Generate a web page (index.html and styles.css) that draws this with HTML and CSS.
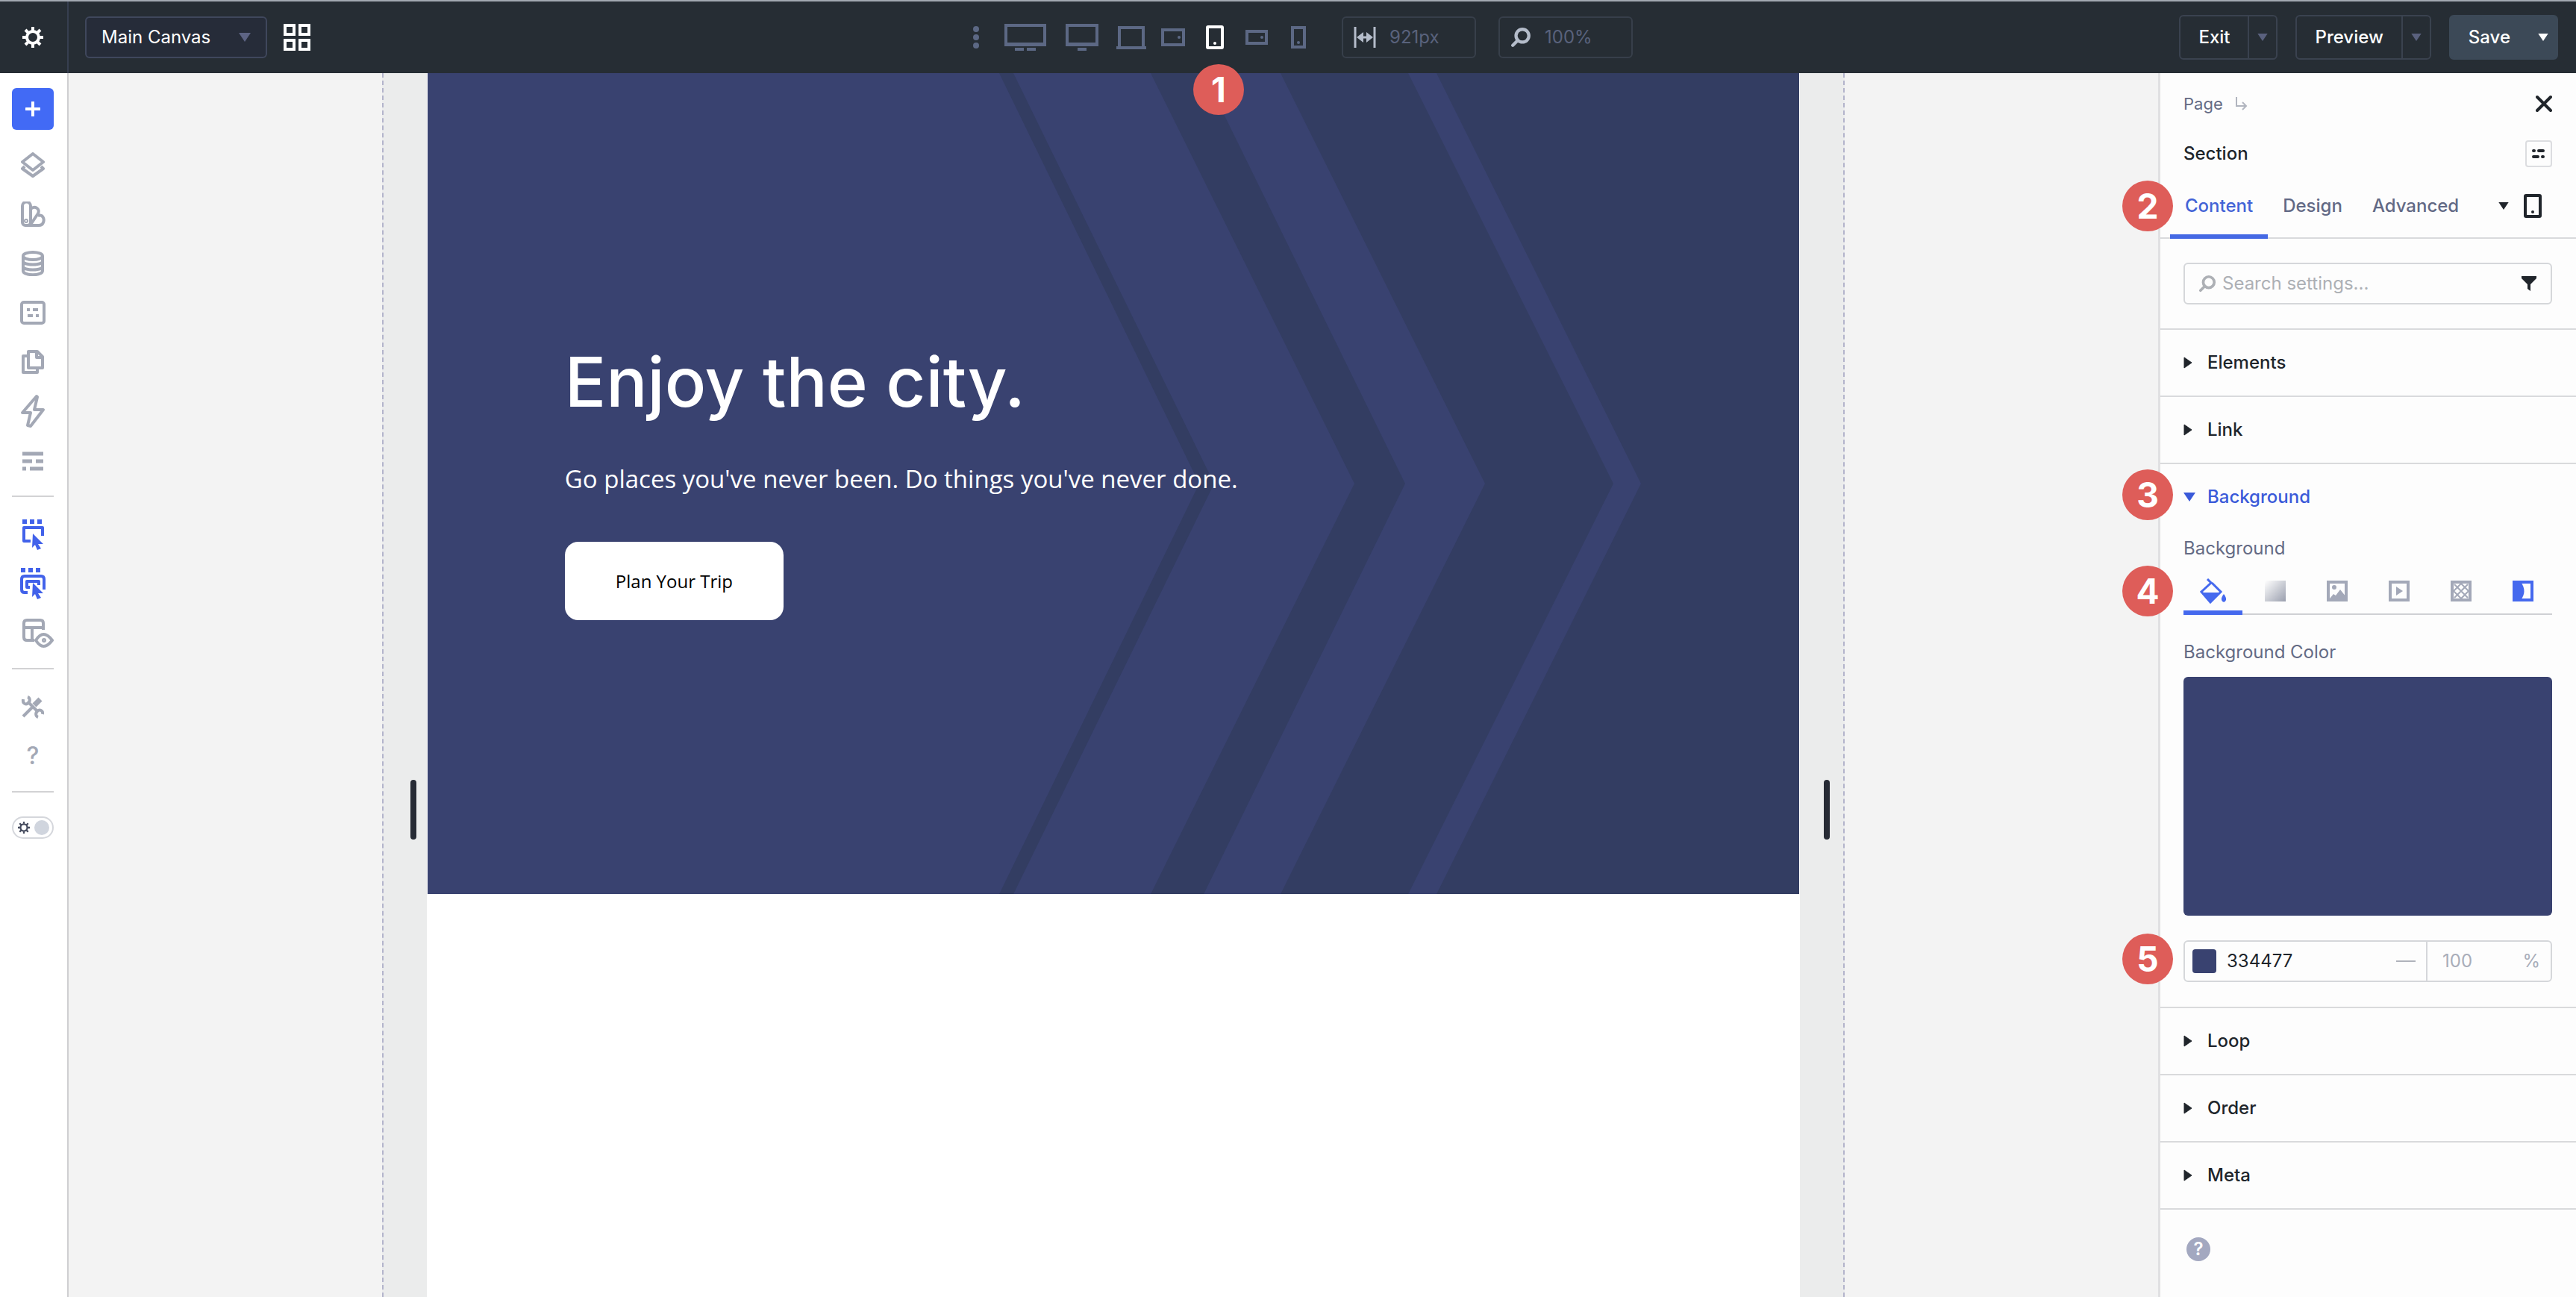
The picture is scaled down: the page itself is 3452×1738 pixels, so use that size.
FILE: index.html
```html
<!DOCTYPE html>
<html lang="en">
<head>
  <meta charset="UTF-8" />
  <meta name="viewport" content="width=device-width, initial-scale=1.0"/>
  <title>Visual Builder</title>
  <link rel="stylesheet" href="styles.css">
</head>
<body>

  <!-- shared shapes -->
  <svg width="0" height="0" class="defs" aria-hidden="true">
    <symbol id="gear" viewBox="0 0 28 28">
      <circle cx="14" cy="14" r="8" fill="none" stroke="currentColor" stroke-width="4"/>
      <path d="M14 5V0M14 23v5M5 14H0M23 14h5M8 8L4 4M20 8l4-4M8 20l-4 4M20 20l4 4" stroke="currentColor" stroke-width="4"/>
    </symbol>
    <symbol id="caret" viewBox="0 0 16 12">
      <path d="M0 0h16L8 12z" fill="currentColor"/>
    </symbol>
    <symbol id="caret-right" viewBox="0 0 12 16">
      <path d="M1 1l10 7-10 7z" fill="currentColor" stroke="currentColor" stroke-linejoin="round"/>
    </symbol>
    <symbol id="search" viewBox="0 0 26 26">
      <circle cx="15" cy="11" r="8" fill="none" stroke="currentColor" stroke-width="4"/>
      <path d="M9 17l-6 6" stroke="currentColor" stroke-width="4" stroke-linecap="round"/>
    </symbol>
    <symbol id="tablet" viewBox="0 0 24 32">
      <rect x="2" y="2" width="20" height="28" rx="1" fill="none" stroke="currentColor" stroke-width="4"/>
      <circle cx="12" cy="24" r="2" fill="currentColor"/>
    </symbol>
  </svg>

  <header class="topbar">
    <div class="topbar-left">
      <button class="settings" aria-label="Settings"><svg width="28" height="28"><use href="#gear"/></svg></button>
      <label class="canvas-select">
        <select aria-label="Canvas">
          <option>Main Canvas</option>
        </select>
        <svg width="16" height="12"><use href="#caret"/></svg>
      </label>
      <button class="grid-button" aria-label="Canvas grid">
        <svg width="36" height="36" viewBox="0 0 36 36" fill="none" stroke="currentColor" stroke-width="4">
          <rect x="2" y="2" width="12" height="12"/><rect x="22" y="2" width="12" height="12"/>
          <rect x="2" y="22" width="12" height="12"/><rect x="22" y="22" width="12" height="12"/>
        </svg>
      </button>
    </div>

    <div class="topbar-center">
      <div class="devices">
        <button aria-label="More breakpoints"><svg width="8" height="32" viewBox="0 0 8 32" fill="currentColor"><circle cx="4" cy="5" r="4"/><circle cx="4" cy="16" r="4"/><circle cx="4" cy="27" r="4"/></svg></button>
        <button class="large" aria-label="Ultra wide"><svg width="56" height="36" viewBox="0 0 56 36"><path d="M2 2h52v26H2zM0 27h56" fill="none" stroke="currentColor" stroke-width="4"/><path d="M14 32h12v4H14zM30 32h12v4H30z" fill="currentColor"/></svg></button>
        <button class="large" aria-label="Widescreen"><svg width="44" height="36" viewBox="0 0 44 36"><path d="M2 2h40v26H2zM0 27h44" fill="none" stroke="currentColor" stroke-width="4"/><path d="M16 32h12v4H16z" fill="currentColor"/></svg></button>
        <button aria-label="Desktop"><svg width="40" height="32" viewBox="0 0 40 32"><path d="M4 30V3h32v27M0 30h40" fill="none" stroke="currentColor" stroke-width="4"/></svg></button>
        <button aria-label="Tablet wide"><svg width="32" height="24" viewBox="0 0 32 24"><rect x="2" y="2" width="28" height="20" fill="none" stroke="currentColor" stroke-width="4"/><circle cx="24" cy="12" r="2" fill="currentColor"/></svg></button>
        <button class="active" aria-label="Tablet"><svg width="24" height="32"><use href="#tablet"/></svg><span class="badge badge-below">1</span></button>
        <button aria-label="Phone wide"><svg width="30" height="20" viewBox="0 0 30 20"><rect x="2" y="2" width="26" height="16" fill="none" stroke="currentColor" stroke-width="4"/><circle cx="22" cy="10" r="2" fill="currentColor"/></svg></button>
        <button aria-label="Phone"><svg width="20" height="30" viewBox="0 0 20 30"><rect x="2" y="2" width="16" height="26" fill="none" stroke="currentColor" stroke-width="4"/><circle cx="10" cy="22" r="2" fill="currentColor"/></svg></button>
      </div>
      <label class="top-field">
        <svg width="30" height="28" viewBox="0 0 30 28"><path d="M2 0v28M28 0v28M7 14h16" fill="none" stroke="currentColor" stroke-width="3"/><path d="M4 14l9-7v14zM26 14l-9-7v14z" fill="currentColor"/></svg>
        <input type="text" value="921px" aria-label="Canvas width">
      </label>
      <label class="top-field">
        <svg width="28" height="28"><use href="#search"/></svg>
        <input type="text" value="100%" aria-label="Zoom">
      </label>
    </div>

    <div class="topbar-right">
      <div class="split">
        <button>Exit</button>
        <button class="split-arrow" aria-label="Exit options"><svg width="14" height="10"><use href="#caret"/></svg></button>
      </div>
      <div class="split">
        <button>Preview</button>
        <button class="split-arrow" aria-label="Preview options"><svg width="14" height="10"><use href="#caret"/></svg></button>
      </div>
      <div class="split split-save">
        <button>Save</button>
        <button class="split-arrow" aria-label="Save options"><svg width="14" height="10"><use href="#caret"/></svg></button>
      </div>
    </div>
  </header>

  <div class="workspace">

    <nav class="sidebar">
      <button class="add" aria-label="Add"><svg width="20" height="20" viewBox="0 0 20 20"><path d="M10 1v18M1 10h18" stroke="currentColor" stroke-width="4" stroke-linecap="round"/></svg></button>
      <button class="tool" aria-label="Layers"><svg width="34" height="34" viewBox="0 0 34 34"><path d="M17 2L31 13 17 24 3 13zM6 19l-3 3 14 10 14-10-3-3"/></svg></button>
      <button class="tool" aria-label="Presets"><svg width="34" height="34" viewBox="0 0 34 34"><path d="M3 6a5 5 0 0 1 11 0v22a4 4 0 0 1-4 4H7a4 4 0 0 1-4-4zM14 10c6-5 13 0 10 6l-10 15M24 19c6-2 9 4 7 9-1 3-3 4-6 4H9"/><circle cx="8" cy="26" r="1"/></svg></button>
      <button class="tool" aria-label="Dynamic data"><svg width="34" height="34" viewBox="0 0 34 34"><ellipse cx="17" cy="7" rx="13" ry="5"/><path d="M4 7v20c0 7 26 7 26 0V7M4 14c0 6 26 6 26 0M4 21c0 6 26 6 26 0"/></svg></button>
      <button class="tool" aria-label="Attributes"><svg width="34" height="34" viewBox="0 0 34 34"><rect x="2" y="3" width="30" height="28" rx="3"/><path d="M9 13h4M17 13h7M10 21h7M21 21h4"/></svg></button>
      <button class="tool" aria-label="Pages"><svg width="34" height="34" viewBox="0 0 34 34"><path d="M11 3h12l7 7v15H11zM22 4v7h7M11 9H4v22h19v-6"/></svg></button>
      <button class="tool" aria-label="Interactions"><svg width="34" height="46" viewBox="0 0 34 46"><path d="M22 3L3 25h11l-4 17 4 1 17-22H19l4-17z"/></svg></button>
      <button class="tool" aria-label="Options"><svg width="34" height="34" viewBox="0 0 34 34"><path d="M3 8h28M3 18h13M21 18h10M3 28h5M13 28h18" stroke-width="5"/></svg></button>
      <hr>
      <button class="tool on" aria-label="Click mode"><svg width="34" height="42" viewBox="0 0 34 42"><path d="M14 30H5V12h25v11" stroke-width="4"/><path d="M3 4h6M13 4h6M23 4h6" stroke-width="6"/><path d="M17 20l14 14h-7l4 6-5 2-3-7-4 4z" fill="currentColor" stroke="none"/></svg></button>
      <button class="tool on" aria-label="Multi select"><svg width="36" height="42" viewBox="0 0 36 42"><path d="M11 33H7q-4 0-4-4V15q0-4 4-4h22q4 0 4 4v14" stroke-width="4"/><path d="M14 26h-4v-8h16v5" stroke-width="4"/><path d="M2 3h6M12 3h6M22 3h6" stroke-width="6"/><path d="M18 20l14 14h-7l4 6-5 2-3-7-4 4z" fill="currentColor" stroke="none"/></svg></button>
      <button class="tool" aria-label="Layout view"><svg class="wide" width="44" height="40" viewBox="0 0 44 40"><path d="M18 30H8q-4 0-4-4V7q0-4 4-4h18q4 0 4 4v9M4 13h26M15 13v17"/><path d="M20 30q10-16 22 0-12 16-22 0z"/><circle cx="31" cy="30" r="1" fill="currentColor"/></svg></button>
      <hr>
      <button class="tool" aria-label="Tools"><svg width="32" height="32" viewBox="0 0 32 32"><path d="M9 9l14 14M3 29L17 15"/><path d="M18 14l8-8" stroke-width="7"/><path d="M3 6c-1 6 4 8 7 5s2-7-1-8M29 26c1-5-4-7-7-4s-2 7 1 8"/></svg></button>
      <button class="tool tool-help" aria-label="Help">?</button>
      <hr>
      <label class="mode-toggle">
        <input type="checkbox" aria-label="Dark mode">
        <svg width="16" height="16"><use href="#gear"/></svg>
        <span class="knob"></span>
      </label>
    </nav>

    <main class="stage">
      <div class="frame">
        <span class="handle"></span>
        <div class="page">
          <section class="hero">
            <svg class="hero-pattern" viewBox="0 0 1838 1100" preserveAspectRatio="none" aria-hidden="true">
              <path d="M766 0h19l269 550-269 550h-19l268-550z"/>
              <path d="M970 0h71l270 550-270 550h-71l273-550z" transform="translate(-1)"/>
              <path d="M1038 0h109l273 550-273 550h-109l270-550z" fill="none"/>
              <path d="M1147 0h171l275 550-275 550h-171l274-550z" transform="translate(-4)"/>
              <path d="M1352 0h486v1100h-486l274-550z"/>
            </svg>
            <div class="hero-content">
              <h1>Enjoy the city.</h1>
              <p>Go places you've never been. Do things you've never done.</p>
              <a class="hero-button" href="#">Plan Your Trip</a>
            </div>
          </section>
        </div>
        <span class="handle"></span>
      </div>
    </main>

    <aside class="panel">
      <div class="row crumbs">
        <a href="#">Page</a>
        <svg width="18" height="20" viewBox="0 0 18 20"><path d="M2 1v12h13M10 8l5 5-5 5" fill="none" stroke="currentColor" stroke-width="2"/></svg>
        <button class="close" aria-label="Close"><svg width="22" height="24" viewBox="0 0 22 24"><path d="M2 3l18 18M20 3L2 21" stroke="currentColor" stroke-width="4" stroke-linecap="round"/></svg></button>
      </div>
      <div class="row title">
        <h2>Section</h2>
        <button class="preset" aria-label="Presets"><svg width="20" height="16" viewBox="0 0 20 16"><path d="M3 4h1M10 4h6M3 12h6M15 12h1" stroke="currentColor" stroke-width="4" stroke-linecap="round"/></svg></button>
      </div>

      <div class="row tabs">
        <span class="badge">2</span>
        <button class="tab active">Content</button>
        <button class="tab">Design</button>
        <button class="tab">Advanced</button>
        <button class="view" aria-label="Breakpoint"><svg width="14" height="10"><use href="#caret"/></svg><svg width="24" height="32"><use href="#tablet"/></svg></button>
      </div>

      <div class="row">
        <div class="search">
          <svg width="24" height="24"><use href="#search"/></svg>
          <input type="search" placeholder="Search settings..." aria-label="Search settings">
          <button class="filter" aria-label="Filter"><svg width="22" height="22" viewBox="0 0 22 22"><path d="M1 1h20v3l-8 8v9l-4-3v-6L1 4z" fill="currentColor"/></svg></button>
        </div>
      </div>

      <div class="group"><button class="row group-head"><svg width="12" height="16"><use href="#caret-right"/></svg>Elements</button></div>
      <div class="group"><button class="row group-head"><svg width="12" height="16"><use href="#caret-right"/></svg>Link</button></div>

      <div class="group">
        <button class="row group-head open"><span class="badge">3</span><svg width="16" height="12"><use href="#caret"/></svg>Background</button>
        <p class="row label">Background</p>
        <div class="row">
          <span class="badge">4</span>
          <div class="bg-tabs">
            <button class="active" aria-label="Color"><svg width="36" height="34" viewBox="0 0 36 34"><path d="M16 6l12 12-14 14L2 18 15 6l-5-5" fill="none" stroke="currentColor" stroke-width="3"/><path d="M3 19h25L14 33zM32 21c7 9 0 11 0 11s-7-2 0-11z" fill="currentColor"/></svg></button>
            <button aria-label="Gradient"><span class="gradient"></span></button>
            <button aria-label="Image"><svg width="28" height="28" viewBox="0 0 28 28"><rect x="2" y="2" width="24" height="24" fill="none" stroke="currentColor" stroke-width="4"/><circle cx="10" cy="9" r="3" fill="currentColor"/><path d="M4 24l5-6 3 2 6-8 8 10v4H4z" fill="currentColor"/></svg></button>
            <button aria-label="Video"><svg width="28" height="28" viewBox="0 0 28 28"><rect x="2" y="2" width="24" height="24" fill="none" stroke="currentColor" stroke-width="4"/><path d="M10 8l9 6-9 6z" fill="currentColor"/></svg></button>
            <button aria-label="Pattern"><svg width="28" height="28" viewBox="0 0 28 28"><rect x="2" y="2" width="24" height="24" fill="none" stroke="currentColor" stroke-width="4"/><path d="M4 14L14 4M5 23L23 5M14 24l10-10M4 14l10 10M5 5l18 18M14 4l10 10" stroke="currentColor" stroke-width="2"/></svg></button>
            <button class="masked" aria-label="Mask"><svg width="28" height="28" viewBox="0 0 28 28"><rect x="2" y="2" width="24" height="24" fill="none" stroke="currentColor" stroke-width="4"/><path d="M2 2h9q9 12 0 24H2z" fill="currentColor"/></svg></button>
          </div>
        </div>
        <p class="row label label-color">Background Color</p>
        <div class="row"><button class="color-preview" aria-label="Pick color"></button></div>
        <div class="row color-row">
          <span class="badge">5</span>
          <div class="color-field">
            <span class="chip"></span>
            <input class="hex" type="text" value="334477" aria-label="Hex color">
            <span class="dash"></span>
            <label class="opacity"><input type="text" value="100" aria-label="Opacity">%</label>
          </div>
        </div>
      </div>

      <div class="group"><button class="row group-head"><svg width="12" height="16"><use href="#caret-right"/></svg>Loop</button></div>
      <div class="group"><button class="row group-head"><svg width="12" height="16"><use href="#caret-right"/></svg>Order</button></div>
      <div class="group"><button class="row group-head"><svg width="12" height="16"><use href="#caret-right"/></svg>Meta</button></div>
      <div class="group row"><button class="help" aria-label="Help">?</button></div>
    </aside>

  </div>
</body>
</html>
```

FILE: styles.css
```css
* {
  box-sizing: border-box;
}

body {
  margin: 0;
  min-height: 100vh;
  display: flex;
  flex-direction: column;
  background: #f3f3f3;
  color: #20252b;
  font-family: Inter, sans-serif;
  font-size: 24px;
  line-height: 28px;
}

button,
input,
select {
  font: inherit;
  color: inherit;
  background: none;
  border: none;
  padding: 0;
  margin: 0;
  outline: none;
}

button {
  cursor: pointer;
}

svg {
  display: block;
  flex: none;
}

.defs {
  position: absolute;
}

/* top bar */
.topbar {
  height: 98px;
  display: grid;
  grid-template-columns: 1fr auto 1fr;
  align-items: center;
  background: #262d34;
  border-top: 2px solid #a3a9b2;
  color: #fff;
}

.topbar-left {
  display: flex;
  align-items: center;
  gap: 22px;
}

.settings {
  width: 92px;
  height: 96px;
  padding: 0 2px 0 0;
  display: flex;
  align-items: center;
  justify-content: center;
  border-right: 2px solid #363e50;
}

.canvas-select {
  display: grid;
  align-items: center;
  width: 244px;
  color: #5d6484;
}

.canvas-select select,
.canvas-select svg {
  grid-area: 1 / 1;
}

.canvas-select select {
  appearance: none;
  height: 56px;
  padding: 0 20px;
  border: 2px solid #3f475c;
  border-radius: 6px;
  background: #262c39;
  color: #fff;
}

.canvas-select svg {
  justify-self: end;
  margin-right: 22px;
  pointer-events: none;
}

.topbar-center {
  display: flex;
  align-items: center;
  gap: 30px;
  margin-left: 16px;
}

.devices {
  display: flex;
  align-items: center;
  color: #5c6884;
}

.devices button {
  position: relative;
  width: 56px;
  display: flex;
  justify-content: center;
}

.devices .large {
  width: 76px;
}

.devices .active {
  color: #fff;
}

.top-field {
  display: flex;
  align-items: center;
  gap: 18px;
  width: 180px;
  height: 56px;
  padding: 0 14px;
  border: 2px solid #373f4a;
  border-radius: 6px;
  color: #b4bcca;
}

.top-field input {
  width: 100%;
  min-width: 0;
  color: #59627c;
}

.topbar-right {
  display: flex;
  justify-content: flex-end;
  gap: 24px;
  padding-right: 24px;
  font-weight: 500;
}

.split {
  display: flex;
  height: 60px;
  border: 2px solid #3a424f;
  border-radius: 6px;
}

.split button {
  padding: 0 24px;
}

.split .split-arrow {
  padding: 0 11px;
  border-left: 2px solid #3a424f;
  color: #5a617e;
}

.split-save {
  background: #3c4957;
  border-color: #3c4957;
}

.split-save .split-arrow {
  border-color: #3c4957;
  color: #fff;
}

/* numbered markers */
.badge {
  position: absolute;
  left: -51px;
  top: 50%;
  width: 68px;
  height: 68px;
  margin-top: -37px;
  border-radius: 50%;
  background: #de5d59;
  color: #fff;
  font-size: 46px;
  font-weight: 700;
  line-height: 68px;
  text-align: center;
  z-index: 2;
}

.badge-below {
  left: 50%;
  top: 52px;
  margin: 0 0 0 -29px;
}

.workspace {
  flex: 1;
  display: flex;
}

/* left tools */
.sidebar {
  width: 92px;
  padding: 20px 2px 0 0;
  display: flex;
  flex-direction: column;
  align-items: center;
  background: #fff;
  border-right: 2px solid #cfcfd1;
}

.add {
  width: 56px;
  height: 56px;
  margin-bottom: 14px;
  display: flex;
  align-items: center;
  justify-content: center;
  border-radius: 6px;
  background: #426af5;
  color: #fff;
}

.tool {
  width: 56px;
  height: 66px;
  display: flex;
  align-items: center;
  justify-content: center;
  color: #a3a8b5;
}

.tool svg {
  fill: none;
  stroke: currentColor;
  stroke-width: 4px;
  stroke-linejoin: round;
}

.tool .wide {
  margin-left: 12px;
}

.on {
  color: #4262ea;
}

.tool-help {
  font-size: 32px;
  font-weight: 500;
}

.sidebar hr {
  width: 56px;
  margin: 14px 0 17px;
  border: none;
  border-top: 2px solid #d2d2d4;
}

.mode-toggle {
  width: 56px;
  height: 30px;
  margin-top: 15px;
  padding: 0 4px 0 6px;
  display: flex;
  align-items: center;
  justify-content: space-between;
  border: 2px solid #d5d7dc;
  border-radius: 15px;
  color: #454b5e;
}

.mode-toggle input {
  position: absolute;
  opacity: 0;
}

.knob {
  width: 20px;
  height: 20px;
  border-radius: 50%;
  background: #d0d5de;
}

/* canvas */
.stage {
  flex: 1;
  display: flex;
  justify-content: center;
}

.frame {
  width: 70%;
  display: flex;
  background: #ebecec;
  border: dashed #b3b4cb;
  border-width: 0 2px;
}

.handle {
  flex: none;
  width: 8px;
  height: 80px;
  margin: 947px 14px 0 36px;
  border-radius: 4px;
  background: #272b35;
}

.page + .handle {
  margin: 947px 18px 0 32px;
}

.page {
  flex: 1;
  background: #fff;
}

.hero {
  display: grid;
  margin: 0 1px;
  background: #394270;
  color: #fff;
}

.hero-pattern,
.hero-content {
  grid-area: 1 / 1;
}

.hero-pattern {
  width: 100%;
  height: 100%;
  min-height: 0;
  contain: size;
  fill: #333d62;
}

.hero-content {
  padding: 20% 10%;
  display: flex;
  flex-direction: column;
  align-items: flex-start;
  gap: 54px;
  z-index: 1;
}

.hero h1 {
  margin: 0;
  font-size: 92px;
  line-height: 92px;
  font-weight: 500;
}

.hero p {
  margin: 0;
  font-family: "Open Sans", sans-serif;
  font-size: 33px;
  line-height: 60px;
}

.hero-button {
  padding: 0 68px;
  border-radius: 18px;
  background: #fff;
  color: #000;
  font-family: "Open Sans", sans-serif;
  font-weight: 500;
  line-height: 105px;
  text-decoration: none;
}

/* settings panel */
.panel {
  width: 560px;
  background: #fdfdfd;
  border-left: 3px solid #e0e0e2;
}

.row {
  position: relative;
  padding: 0 32px 0 31px;
}

.crumbs {
  margin-top: 27px;
  display: flex;
  align-items: center;
  gap: 16px;
  font-size: 22px;
  color: #b1b5bf;
}

.crumbs a {
  color: #646b85;
  text-decoration: none;
}

.close {
  margin-left: auto;
  color: #20252b;
}

.title {
  margin: 35px 0 14px;
  display: flex;
  align-items: center;
  justify-content: space-between;
}

.title h2 {
  margin: 0;
  font-size: 24px;
  font-weight: 500;
}

.preset {
  width: 36px;
  height: 36px;
  display: flex;
  align-items: center;
  justify-content: center;
  border: 2px solid #dcdde0;
  border-radius: 4px;
}

.tabs {
  height: 82px;
  display: flex;
  margin-bottom: 32px;
  box-shadow: inset 0 -2px #d9dadc;
}

.tab {
  padding: 0 20px;
  border-bottom: 6px solid transparent;
  color: #626985;
  font-weight: 500;
}

.tab.active {
  margin-left: -18px;
  border-color: #4569e4;
  color: #4363d6;
}

.view {
  margin: 0 14px 6px auto;
  display: flex;
  align-items: center;
  gap: 20px;
}

.search {
  height: 56px;
  margin-bottom: 32px;
  padding: 0 18px;
  display: flex;
  align-items: center;
  gap: 8px;
  border: 2px solid #d5d7da;
  border-radius: 6px;
  color: #adb0b5;
}

.search input {
  flex: 1;
  min-width: 0;
}

.search input::placeholder {
  color: #adb0b5;
}

.filter {
  color: #20252b;
}

.group {
  border-top: 2px solid #d9dadc;
}

.group-head {
  width: 100%;
  height: 88px;
  display: flex;
  align-items: center;
  gap: 20px;
  font-weight: 500;
}

.open {
  gap: 16px;
  color: #3a5ad9;
}

.label {
  margin: 11px 0 17px;
  color: #646b85;
}

.label-color {
  margin: 36px 0 19px;
}

.bg-tabs {
  display: flex;
  gap: 4px;
  height: 58px;
  box-shadow: inset 0 -2px #cfd0d4;
  color: #a3a8b8;
}

.bg-tabs button {
  flex: 1;
  display: flex;
  align-items: center;
  justify-content: center;
  border-bottom: 6px solid transparent;
}

.bg-tabs .active {
  color: #4569ee;
  border-color: #4569ee;
}

.bg-tabs .masked {
  color: #4569ee;
}

.gradient {
  width: 28px;
  height: 28px;
  background: linear-gradient(135deg, #fff, #9a9fae);
}

.color-preview {
  display: block;
  width: 100%;
  height: 320px;
  border-radius: 6px;
  background: #394270;
}

.color-row {
  margin: 33px 0;
}

.color-field {
  height: 56px;
  display: flex;
  align-items: center;
  border: 2px solid #d5d7da;
  border-radius: 6px;
}

.chip {
  width: 32px;
  height: 32px;
  margin: 0 14px 0 10px;
  border-radius: 4px;
  background: #394270;
}

.hex {
  flex: 1;
  min-width: 0;
}

.dash {
  width: 26px;
  height: 2px;
  margin-right: 14px;
  background: #b0b3bb;
}

.opacity {
  width: 167px;
  height: 100%;
  padding: 0 14px 0 20px;
  display: flex;
  align-items: center;
  border-left: 2px solid #d5d7da;
  color: #a9adb9;
}

.opacity input {
  flex: 1;
  min-width: 0;
}

.help {
  width: 32px;
  height: 32px;
  margin: 37px 4px;
  border-radius: 50%;
  background: #a3a8c0;
  color: #fff;
  font-weight: 600;
}
```
